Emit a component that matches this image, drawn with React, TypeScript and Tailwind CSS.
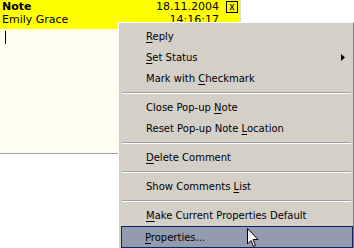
import React from 'react'

type Item = { label: string; key: number; arrow?: boolean; active?: boolean } | 'sep'

const items: Item[] = [
  { label: 'Reply', key: 0 },
  { label: 'Set Status', key: 0, arrow: true },
  { label: 'Mark with Checkmark', key: 10 },
  'sep',
  { label: 'Close Pop-up Note', key: 13 },
  { label: 'Reset Pop-up Note Location', key: 18 },
  'sep',
  { label: 'Delete Comment', key: 0 },
  'sep',
  { label: 'Show Comments List', key: 14 },
  'sep',
  { label: 'Make Current Properties Default', key: 0 },
  { label: 'Properties...', key: 0, active: true },
]

function Label({ text, at }: { text: string; at: number }) {
  return (
    <span>
      {text.slice(0, at)}
      <span className="underline underline-offset-[2px]">{text[at]}</span>
      {text.slice(at + 1)}
    </span>
  )
}

export default function App() {
  return (
    <div className="relative w-[354px] h-[248px] overflow-hidden bg-white font-['DejaVu_Sans',sans-serif] text-[10px] text-black">
      {/* pop-up note */}
      <div className="w-[241px] border-r border-[#d8d8d8]">
        <div className="bg-[#ffff00] h-[29px] px-[2px] pt-[1px] flex flex-col leading-[12px]">
          <div className="flex items-center">
            <span className="font-bold text-[11px]">Note</span>
            <span className="ml-auto text-[11px]">18.11.2004</span>
            <span className="ml-[7px] w-[12px] h-[12px] border border-black flex items-center justify-center text-[10px] leading-none">x</span>
          </div>
          <div className="flex items-center mt-[1px]">
            <span className="text-[11px]">Emily Grace</span>
            <span className="ml-auto mr-[19px] text-[11px]">14:16:17</span>
          </div>
        </div>
        <div className="bg-[#fffff0] h-[125px] border-b border-[#a0a0a0] pl-[5px] pt-[2px]">
          <div className="w-px h-[13px] bg-black" />
        </div>
      </div>

      {/* context menu */}
      <div className="absolute left-[118px] top-[22px] w-[236px] h-[228px] bg-[#d4d0c8] border-l border-t border-white border-r border-r-[#808080] border-b border-b-[#808080] pl-[2px] pt-[3px]">
        {items.map((it, i) =>
          it === 'sep' ? (
            <div key={i} className="h-[8px] flex flex-col justify-center pl-[1px] pr-[2px]">
              <div className="h-px bg-[#a0a0a0]" />
              <div className="h-px bg-white" />
            </div>
          ) : (
            <div
              key={i}
              className={
                it.active
                  ? 'h-[22px] flex items-center pl-[23px] bg-[#939bb0] border border-[#0a246a]'
                  : 'h-[21px] flex items-center pl-[24px] border border-transparent'
              }
            >
              <Label text={it.label} at={it.key} />
              {it.arrow && (
                <svg className="ml-auto mr-[7px]" width="4" height="7" viewBox="0 0 4 7">
                  <path d="M0 0 L4 3.5 L0 7 Z" fill="black" />
                </svg>
              )}
            </div>
          )
        )}
      </div>

      {/* mouse pointer */}
      <svg className="absolute left-[247px] top-[228px]" width="13" height="20" viewBox="0 0 13 20">
        <path d="M0.5 0.5 L0.5 16 L4 12.5 L6.5 18.5 L8.5 17.5 L6 11.5 L11 11.5 Z" fill="white" stroke="black" strokeWidth="1" />
      </svg>
    </div>
  )
}
